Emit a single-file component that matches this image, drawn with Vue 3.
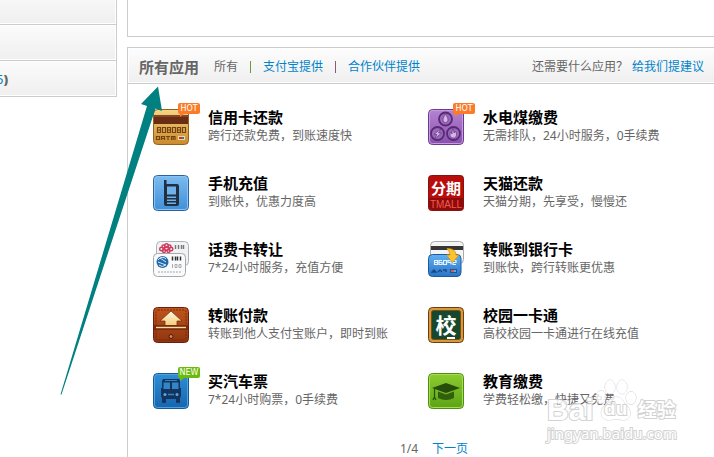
<template>
  <div class="page">
    <aside class="sidebar">
      <div class="side-row"></div>
      <div class="side-row"></div>
      <div class="side-row"><a href="#">5</a><b>)</b></div>
    </aside>

    <main class="main">
      <section class="panel panel-top"></section>

      <section class="panel">
        <header class="panel-head">
          <h2>所有应用</h2>
          <nav class="filter">
            <span>所有</span>
            <i class="sep green"></i>
            <a href="#">支付宝提供</a>
            <i class="sep"></i>
            <a href="#">合作伙伴提供</a>
          </nav>
          <p class="suggest">还需要什么应用？<a href="#">给我们提建议</a></p>
        </header>

        <ul class="app-list">
          <li v-for="app in apps" :key="app.icon" class="app">
            <div class="app-icon">
              <svg v-if="app.icon === 'credit'" viewBox="0 0 36 36">
                <rect x=".5" y=".5" width="35" height="35" rx="4" fill="url(#gold)" stroke="#9a6018" />
                <path d="M1 6h34v9H1z" fill="#6b2c14" />
                <path d="M1 6h34v2H1z" fill="#864528" />
                <g fill="none" stroke="#754014" stroke-width="1.2">
                  <path d="M4.500 18.500h3v5h-3zM4.500 21h3M9.500 18.500h3v5h-3zM14.500 18.500h3v5h-3zM14.500 21h3M19.500 18.500h3v5h-3zM24.500 18.500h3v5h-3zM24.500 21h3M29.500 18.500h3v5h-3z" />
                  <path d="M3.500 27.500h3v3h-3zM8.500 31v-3.500h3V31M8.500 29.500h3M13 27.500h4M15 27.500V31M18.500 31v-3.500h3.500V31M20.200 28v3" />
                </g>
                <rect x="25" y="27" width="7" height="4" fill="#f2d7a0" />
                <path d="M26 28h3v2h-3z" fill="#c33a2a" />
                <path d="M29 28h2v2h-2z" fill="#3c6fae" />
              </svg>

              <svg v-else-if="app.icon === 'utility'" viewBox="0 0 36 36">
                <rect x=".5" y=".5" width="35" height="35" rx="4" fill="url(#purple)" stroke="#6a3a8c" />
                <rect x="1.500" y="1.500" width="33" height="33" rx="3" fill="none" stroke="#c79be0" />
                <g fill="#9a68b8" stroke="#572a75" stroke-width="1.800">
                  <circle cx="17.500" cy="10" r="6.500" />
                  <circle cx="9.500" cy="24.500" r="6.500" />
                  <circle cx="25.500" cy="24.500" r="6.500" />
                </g>
                <g fill="#d9b4ea" stroke="#572a75" stroke-width=".6">
                  <path d="M17.500 5c1 2 2.500 3.500 2.500 6a2.500 2.500 0 0 1-5 0c0-2.500 1.500-4 2.500-6z" />
                  <path d="M13 19.500l-7 6h3l-2.500 4.500 7-6h-3z" />
                  <path d="M25 19.500c0 2 1 2.500 1 4.500 1-1 1-2 1-2 2.500 2 2 7-1.500 7s-4.500-4-2.500-6c0 1 1 2 1 2 0-2 0-3 1-5.500z" />
                </g>
              </svg>

              <svg v-else-if="app.icon === 'phone'" viewBox="0 0 36 36">
                <rect x=".5" y=".5" width="35" height="35" rx="4" fill="url(#sky)" stroke="#2b62a4" />
                <rect x="1.500" y="1.500" width="33" height="33" rx="3" fill="none" stroke="#8cc3f2" />
                <path d="M11 5h2.500v4H24q2 0 2 2v18q0 2-2 2H13q-2 0-2-2z" fill="#202f42" />
                <path d="M14 11.500h9v8h-9z" fill="#6fb2ea" />
                <path d="M14 21.500h9V23h-9zM14 24.500h9V26h-9zM14 27.500h9V29h-9z" fill="#6fb2ea" />
              </svg>

              <svg v-else-if="app.icon === 'tmall'" viewBox="0 0 36 36">
                <rect x=".5" y=".5" width="35" height="35" rx="3" fill="#b90d0b" stroke="#85140f" />
                <path d="M1 23h34v9q0 3-3 3H4q-3 0-3-3z" fill="#8f0b09" />
                <text x="18" y="19" class="zh" font-size="15">分期</text>
                <text x="18" y="33" class="latin" font-size="10" fill="#ef5a4e">TMALL</text>
              </svg>

              <svg v-else-if="app.icon === 'cards'" viewBox="0 0 36 36">
                <rect x="3.500" y=".5" width="32" height="24" rx="4" fill="#f0f2f3" stroke="#a6b5ba" />
                <g fill="none" stroke="#d23b60" stroke-width="1.400">
                  <circle cx="8.500" cy="8" r="1.800" /><circle cx="13.500" cy="4.500" r="1.800" />
                  <circle cx="18" cy="8" r="1.800" /><circle cx="13.500" cy="7.500" r="1.800" />
                  <circle cx="11" cy="10" r="1.500" /><circle cx="15.500" cy="10" r="1.500" />
                  <circle cx="10.500" cy="5.500" r="1.500" /><circle cx="16.500" cy="5.500" r="1.500" />
                </g>
                <path d="M22.500 4v4M25.500 4v4M28.500 4v4M30.500 4v4" stroke="#777" stroke-width="1.400" />
                <rect x=".5" y="12.500" width="32" height="23" rx="4" fill="#f9fafb" stroke="#a5a9ad" />
                <circle cx="9.500" cy="21" r="6" fill="#2269a9" />
                <path d="M5 19q4-5 8-1M5 21l8 3M7 17l6 4M6 24q3 3 7 0" fill="none" stroke="#d7ebf8" />
                <path d="M19.500 15.500v4M22.500 15.500v4M24.500 15.500v4M27.500 15.500v4" stroke="#333" stroke-width="1.500" />
                <path d="M19.500 23v4M22 23.500h2v3h-2zM26 23.500h2v3h-2z" fill="none" stroke="#aaa" />
                <path d="M5 31h23" stroke="#d0d0d0" stroke-width="2" stroke-dasharray="2 1" />
              </svg>

              <svg v-else-if="app.icon === 'bank'" viewBox="0 0 36 36">
                <rect x="2.500" y=".5" width="33" height="22" rx="4" fill="#f4f4f4" stroke="#aaa" />
                <path d="M3 5h32v4H3z" fill="#373636" />
                <rect x=".5" y="13.500" width="32.500" height="22" rx="4" fill="url(#blue-card)" stroke="#1d5a9c" />
                <g fill="none" stroke="#e2f3ff" stroke-width="1.200">
                  <path d="M6.500 19.500h3v4h-3zM6.500 21.500h3M14 19.500h-3v4h3v-2h-3M15.500 19.500h3v4h-3zM23 23.500v-4h-3v2h3M25 19.500h3v2h-3v2h3" />
                </g>
                <path d="M4 31l2-2 2 2zM10 31l2-2 2 2M15 29h3v2" stroke="#174a86" stroke-width="1.400" fill="none" />
                <rect x="22" y="28" width="7" height="4" fill="#285289" />
                <path d="M23 29h3v2h-3z" fill="#d85a6a" /><path d="M26 29h2v2h-2z" fill="#62aee8" />
                <path d="M19 7.500q9 0 9 6.500h3l-6.500 7.500-6-7.500h3.500q0-3-3-6.500z" fill="#fbc32c" stroke="#d8901a" stroke-width=".8" />
              </svg>

              <svg v-else-if="app.icon === 'transfer'" viewBox="0 0 36 36">
                <rect x=".5" y=".5" width="35" height="35" rx="4" fill="url(#leather)" stroke="#6a1e0c" />
                <rect x="3" y="3" width="30" height="30" rx="2" fill="none" stroke="#6a240c" stroke-width=".8" stroke-dasharray="2 1" />
                <path d="M18 4l11 10h-5v5H12v-5H7z" fill="url(#cream)" stroke="#7a3410" stroke-width=".8" />
                <path d="M1 18h34v5H1z" fill="#7c2a0c" />
                <path d="M3 20.500h30" stroke="#f8d9a8" stroke-width="1.400" />
                <circle cx="18" cy="29.500" r="2" fill="#c98a5a" stroke="#4f1b08" />
              </svg>

              <svg v-else-if="app.icon === 'school'" viewBox="0 0 36 36">
                <rect x=".5" y=".5" width="35" height="35" rx="4" fill="#d69a3a" stroke="#6e3e12" />
                <rect x="3.500" y="3.500" width="29" height="29" rx="2" fill="#16482d" stroke="#7d4c15" />
                <text x="18" y="26" class="zh" font-size="21">校</text>
                <path d="M19 31h8" stroke="#fff" stroke-width="2" />
              </svg>

              <svg v-else-if="app.icon === 'bus'" viewBox="0 0 36 36">
                <rect x=".5" y=".5" width="35" height="35" rx="4" fill="url(#blue)" stroke="#14589a" />
                <rect x="1.500" y="1.500" width="33" height="33" rx="3" fill="none" stroke="#4ea3dc" />
                <path d="M10 6h16l1 2v7h1v8l-1 2v4q0 1-1 1h-2q-1 0-1-1v-3H13v3q0 1-1 1h-2q-1 0-1-1v-4l-1-2v-8h1V8z" fill="#12345e" />
                <path d="M10.500 9.500h6.500V16h-6.500zM19 9.500h6.500V16H19z" fill="#3485c6" />
                <path d="M12 7.500h12" stroke="#3b83bf" />
                <circle cx="12" cy="21.500" r="1.500" fill="#5ba9e0" /><circle cx="24" cy="21.500" r="1.500" fill="#5ba9e0" />
                <path d="M15 21.500h6" stroke="#3c82bb" stroke-width="1.500" />
              </svg>

              <svg v-else viewBox="0 0 36 36">
                <rect x=".5" y=".5" width="35" height="35" rx="4" fill="url(#green)" stroke="#4b8e12" />
                <rect x="1.500" y="1.500" width="33" height="33" rx="3" fill="none" stroke="#a8dc57" />
                <path d="M4 15l14-5 14 5-14 5z" fill="#264d0a" />
                <path d="M10 18.500l8 3 8-3V25q-8 4-16 0z" fill="#315f0e" />
                <path d="M6.500 16v9M5 27l1.500-3L8 27" stroke="#264d0a" stroke-width="1.200" fill="none" />
              </svg>

              <span v-if="app.badge" class="badge" :class="app.badge">{{ app.badge.toUpperCase() }}</span>
            </div>
            <div class="app-text">
              <h3>{{ app.name }}</h3>
              <p>{{ app.desc }}</p>
            </div>
          </li>
        </ul>

        <div class="pager">
          <span>1/4</span>
          <a href="#">下一页</a>
        </div>
      </section>
    </main>

    <!-- 指向“所有应用”的箭头 -->
    <svg class="arrow" width="104" height="310" viewBox="0 0 104 310">
      <path d="M.5 309.500L87 21l-6-2L98 1.500l4 24.500-6.500-2.500L1.500 309.500z" fill="#008080" />
    </svg>

    <!-- 水印 -->
    <div class="watermark">
      <div class="mark-logo">
        <span class="bai">Bai</span>
        <span class="paw">
          <svg viewBox="0 0 44 44">
            <ellipse cx="7" cy="18" rx="5" ry="6.500" />
            <ellipse cx="16" cy="8" rx="5" ry="7" />
            <ellipse cx="28" cy="8" rx="5" ry="7" />
            <ellipse cx="37" cy="19" rx="5" ry="6.500" />
            <path d="M22 18c6 0 7 5 11 9 5 5 4 14-3 14-4 0-5-1-8-1s-4 1-8 1c-7 0-9-9-4-14 4-4 6-9 12-9z" />
          </svg>
          <em>du</em>
        </span>
        <span class="jy">经验</span>
      </div>
      <div class="mark-url">jingyan.baidu.com</div>
    </div>

    <svg class="defs" width="0" height="0">
      <defs>
        <linearGradient v-for="g in gradients" :id="g.id" :key="g.id" x1="0" y1="0" x2="0" y2="1">
          <stop offset="0" :stop-color="g.from" />
          <stop offset="1" :stop-color="g.to" />
        </linearGradient>
      </defs>
    </svg>
  </div>
</template>

<script setup>
const apps = [
  { icon: 'credit', name: '信用卡还款', desc: '跨行还款免费，到账速度快', badge: 'hot' },
  { icon: 'utility', name: '水电煤缴费', desc: '无需排队，24小时服务，0手续费', badge: 'hot' },
  { icon: 'phone', name: '手机充值', desc: '到账快，优惠力度高' },
  { icon: 'tmall', name: '天猫还款', desc: '天猫分期，先享受，慢慢还' },
  { icon: 'cards', name: '话费卡转让', desc: '7*24小时服务，充值方便' },
  { icon: 'bank', name: '转账到银行卡', desc: '到账快，跨行转账更优惠' },
  { icon: 'transfer', name: '转账付款', desc: '转账到他人支付宝账户，即时到账' },
  { icon: 'school', name: '校园一卡通', desc: '高校校园一卡通进行在线充值' },
  { icon: 'bus', name: '买汽车票', desc: '7*24小时购票，0手续费', badge: 'new' },
  { icon: 'edu', name: '教育缴费', desc: '学费轻松缴，快捷又免费' }
]

// 图标底色渐变
const gradients = [
  { id: 'gold', from: '#f6d583', to: '#c98a2c' },
  { id: 'purple', from: '#b584d2', to: '#8a4fae' },
  { id: 'sky', from: '#7cbcf0', to: '#3f8fd8' },
  { id: 'blue-card', from: '#5fb0f4', to: '#2a74c6' },
  { id: 'leather', from: '#c2551c', to: '#8f350e' },
  { id: 'cream', from: '#fffbe0', to: '#f3c878' },
  { id: 'blue', from: '#2f8fd4', to: '#1764ae' },
  { id: 'green', from: '#8ccc30', to: '#5ba315' }
]
</script>

<style>
body {
  margin: 0;
  background: #fff;
}
</style>

<style scoped>
.page {
  position: relative;
  display: flex;
  gap: 10px;
  height: 100vh;
  overflow: hidden;
  font: 12px/18px "Noto Sans", "Noto Sans CJK SC", sans-serif;
  color: #666;
}

a {
  color: #0083cb;
  text-decoration: none;
}

h2,
h3,
p,
ul {
  margin: 0;
  padding: 0;
}

/* 左侧栏 */
.sidebar {
  flex: none;
  box-sizing: border-box;
  width: 200px;
  margin-left: -83px;
  margin-top: -12px;
}

.side-row {
  display: flex;
  align-items: center;
  box-sizing: border-box;
  height: 36px;
  padding-left: 78px;
  border: 1px solid #ccc;
  border-top: 0;
  box-shadow: inset 0 0 0 1px #fff;
  background: linear-gradient(#fbfbfb, #efefef);
  font-size: 13px;
  font-weight: bold;
}

.side-row:first-child {
  height: 37px;
}

.side-row a {
  font-weight: normal;
}

/* 主区域 */
.main {
  flex: 1;
  min-width: 0;
  display: flex;
  flex-direction: column;
  gap: 10px;
}

.panel {
  flex: 1;
  border: 1px solid #ccc;
  border-right: 0;
}

.panel-top {
  flex: none;
  height: 36px;
  border-top: 0;
}

.panel-head {
  display: flex;
  align-items: center;
  box-sizing: border-box;
  height: 36px;
  padding: 2px 10px 0 11px;
  border-bottom: 1px solid #ccc;
  box-shadow: inset 1px 1px 0 #fff, inset 0 -1px 0 #fff;
  background: linear-gradient(#fdfdfd, #efefef);
}

.panel-head h2 {
  font-size: 15px;
  line-height: 20px;
}

.filter {
  display: flex;
  align-items: center;
  gap: 12px;
  margin-left: 15px;
}

.sep {
  width: 1px;
  height: 12px;
  background: #8a5a78;
}

.sep.green {
  background: #6a9a40;
}

.suggest {
  margin-left: auto;
}

.suggest a {
  margin-left: 4px;
}

.app-list {
  display: grid;
  grid-template-columns: 275px 1fr;
  padding: 23px 0 0 25px;
  list-style: none;
}

.app {
  display: flex;
  gap: 19px;
  height: 66px;
}

.app-icon {
  position: relative;
  flex: none;
  width: 36px;
  height: 36px;
  margin-top: 2px;
}

.app-icon svg {
  display: block;
  width: 36px;
  height: 36px;
}

.zh {
  fill: #fff;
  font-family: "Noto Sans CJK SC", sans-serif;
  font-weight: bold;
  text-anchor: middle;
}

.latin {
  font-family: "Liberation Sans", sans-serif;
  text-anchor: middle;
}

.badge {
  position: absolute;
  top: -6px;
  right: -11px;
  width: 22px;
  height: 11px;
  border-radius: 2px;
  background: #fb7b28;
  color: #fff;
  font: 8px/11px "DejaVu Sans", sans-serif;
  text-align: center;
}

.badge::after {
  content: "";
  position: absolute;
  left: 2px;
  top: 11px;
  border-top: 3px solid #fb7b28;
  border-right: 4px solid transparent;
}

.badge.new {
  background: #6cbb0c;
}

.badge.new::after {
  border-top-color: #6cbb0c;
}

.app-text h3 {
  color: #000;
  font-size: 15px;
  line-height: 20px;
}

.pager {
  display: flex;
  justify-content: center;
  gap: 14px;
  padding: 3px 0 0 26px;
}

/* 标注箭头 */
.arrow {
  position: absolute;
  left: 60px;
  top: 85px;
}

.defs {
  position: absolute;
}

/* 水印 */
.watermark {
  position: absolute;
  left: 547px;
  top: 379px;
  color: #fff;
  opacity: 0.8;
  font-family: "Liberation Sans", "Noto Sans CJK SC", sans-serif;
  -webkit-text-stroke: 2px #c8c8c8;
  paint-order: stroke fill;
}

.mark-logo {
  display: flex;
  align-items: flex-end;
  height: 44px;
}

.bai {
  font-size: 30px;
  line-height: 26px;
  font-weight: bold;
}

.paw {
  position: relative;
  width: 44px;
  height: 44px;
}

.paw svg {
  width: 44px;
  height: 44px;
  fill: #fff;
  stroke: #c8c8c8;
}

.paw em {
  position: absolute;
  left: 0;
  right: 0;
  bottom: 4px;
  font: bold 19px/20px "Liberation Sans", sans-serif;
  text-align: center;
}

.jy {
  font-size: 19px;
  line-height: 24px;
  font-weight: bold;
}

.mark-url {
  font-family: "Noto Sans", sans-serif;
  font-size: 15px;
  line-height: 20px;
}
</style>
